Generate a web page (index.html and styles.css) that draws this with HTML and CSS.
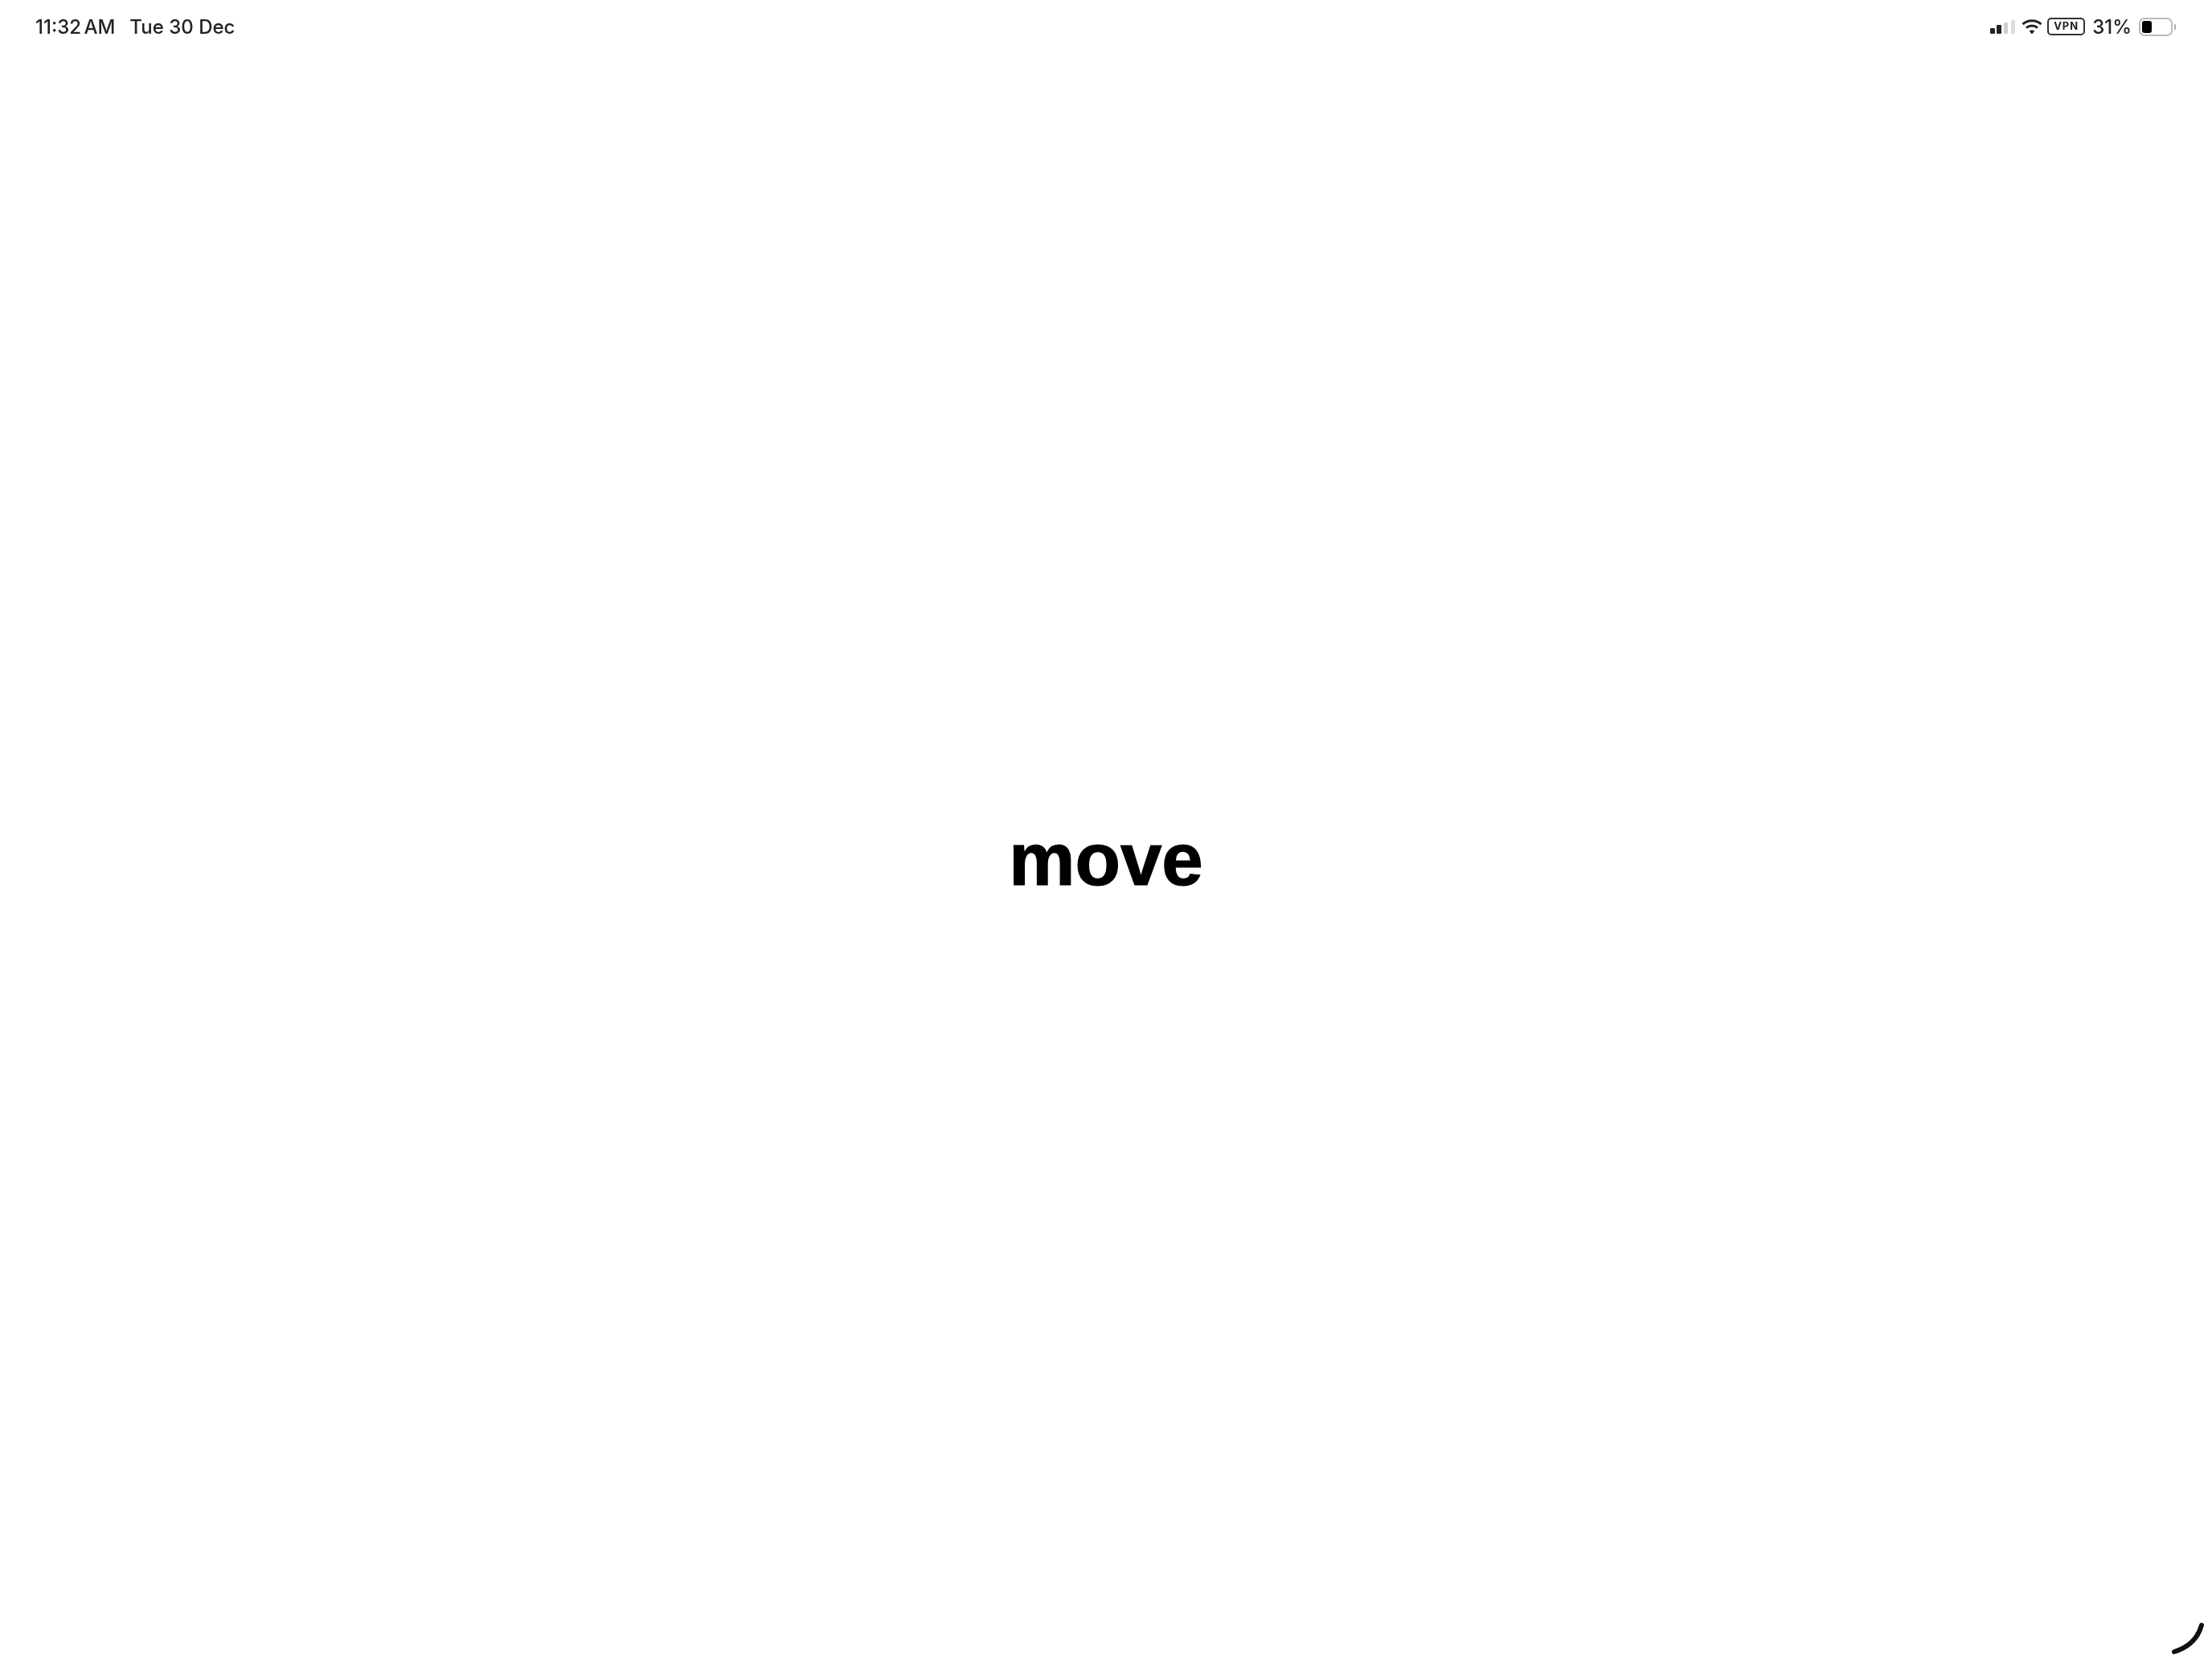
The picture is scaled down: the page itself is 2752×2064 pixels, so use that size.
FILE: index.html
```html
<!DOCTYPE html>
<html lang="en">
<head>
<meta charset="utf-8">
<title>move</title>
<link rel="stylesheet" href="styles.css">
</head>
<body>
<div class="screen">
  <header class="status">
    <div class="clock">
      <span class="time">11:32 AM</span>
      <span>Tue 30 Dec</span>
    </div>
    <div class="indicators">
      <svg class="signal" width="32" height="17" viewBox="0 0 32 17">
        <rect x="0" y="10" width="6" height="7" rx="1" fill="#222"/>
        <rect x="8" y="6" width="6" height="11" rx="1" fill="#222"/>
        <rect x="17" y="3" width="5" height="14" rx="1" fill="#cfcfcf"/>
        <rect x="26" y="0" width="5" height="17" rx="1" fill="#dcdcdc"/>
      </svg>
      <svg class="wifi" width="26" height="20" viewBox="0 0 26 20" fill="none" stroke="#222" stroke-width="3">
        <path d="M1.5 7.2C8 1.2 18 1.2 24.5 7.2"/>
        <path d="M6 11.6C10 8 16 8 20 11.6"/>
        <path d="M13 19.5 9.6 15.6C11.5 14 14.5 14 16.4 15.6Z" fill="#222" stroke="none"/>
      </svg>
      <span class="vpn">VPN</span>
      <span class="percent">31%</span>
      <div class="battery">
        <div class="battery-body"><div class="battery-level"></div></div>
        <div class="battery-tip"></div>
      </div>
    </div>
  </header>
  <main class="content">
    <h1 class="word">move</h1>
  </main>
  <svg class="corner" width="42" height="42" viewBox="0 0 42 42" fill="none">
    <path d="M4 38C20 33 33 23 38 5" stroke="#111" stroke-width="6" stroke-linecap="round"/>
  </svg>
</div>
</body>
</html>
```

FILE: styles.css
```css
* { box-sizing: border-box; }
html, body { margin: 0; height: 100%; background: #fff; }
body { font-family: "Inter", "Liberation Sans", sans-serif; color: #222; }
.screen {
  position: relative;
  width: 100%;
  height: 100vh;
  display: flex;
  flex-direction: column;
  overflow: hidden;
}
.status {
  height: 66px;
  padding: 0 45px 0 44px;
  display: flex;
  justify-content: space-between;
  align-items: center;
  font-size: 24px;
  font-weight: 500;
  filter: blur(0.7px);
}
.clock { display: flex; gap: 18px; }
.time { word-spacing: -3px; }
.indicators { display: flex; align-items: center; gap: 9px; }
.signal { margin-right: -2px; }
.wifi { margin-right: -3px; }
.vpn {
  width: 47px;
  height: 22px;
  border: 2.5px solid #333;
  border-radius: 5px;
  font-size: 13px;
  font-weight: 700;
  letter-spacing: 1px;
  line-height: 17px;
  text-align: center;
}
.battery { display: flex; align-items: center; gap: 2px; }
.battery-body {
  width: 42px;
  height: 23px;
  border: 2px solid #bbb;
  border-radius: 7px;
  padding: 2px;
}
.battery-level { width: 12px; height: 100%; background: #000; border-radius: 3px; }
.battery-tip { width: 2px; height: 7px; background: #aaa; border-radius: 1px; }
.content {
  flex: 1;
  display: flex;
  align-items: center;
  justify-content: center;
  padding-top: 8px;
}
.word {
  margin: 0;
  font-family: "Liberation Sans", Arial, sans-serif;
  font-size: 92.5px;
  font-weight: 700;
  color: #000;
  line-height: 1;
  -webkit-text-stroke: 1.2px #000;
  filter: blur(0.7px);
}
.corner { position: absolute; right: 9px; bottom: 5px; filter: blur(0.6px); }
```
